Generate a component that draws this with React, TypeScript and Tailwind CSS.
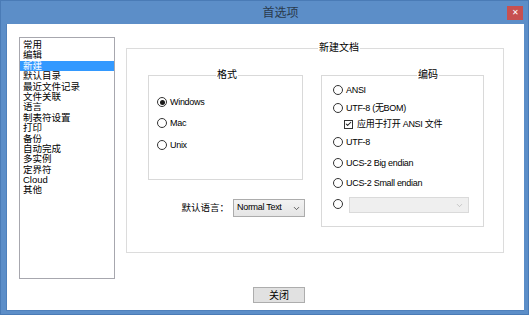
import { Check, ChevronDown } from 'lucide-react';

const font = "font-['Liberation_Sans','Noto_Sans_CJK_SC',sans-serif]";

const items = [
  '常用',
  '编辑',
  '新建',
  '默认目录',
  '最近文件记录',
  '文件关联',
  '语言',
  '制表符设置',
  '打印',
  '备份',
  '自动完成',
  '多实例',
  '定界符',
  'Cloud',
  '其他',
];

function Radio({ checked = false }: { checked?: boolean }) {
  return (
    <span className="w-[10px] h-[10px] rounded-full border border-[#333333] bg-white flex items-center justify-center shrink-0">
      {checked && <span className="w-[5px] h-[5px] rounded-full bg-[#1a1a1a]" />}
    </span>
  );
}

function RadioRow({
  label,
  checked,
  className = '',
}: {
  label: string;
  checked?: boolean;
  className?: string;
}) {
  return (
    <div className={`flex items-center h-[12px] gap-[3px] ${className}`}>
      <Radio checked={checked} />
      <span className="text-[9px] tracking-[-0.3px] leading-[12px]">{label}</span>
    </div>
  );
}

export default function App() {
  return (
    <div className={`w-[529px] h-[315px] bg-[#5c8ec8] border border-[#4a7bb6] relative flex flex-col ${font} text-black`}>
      {/* title bar */}
      <div className="h-[23px] flex items-center justify-center pl-[32px] text-[12px] text-[#2a3a4c]">
        首选项
      </div>
      <div className="absolute right-[5px] top-[5px] w-[16px] h-[14px] bg-[#c75050] flex items-center justify-center text-white text-[8px] leading-none">
        ✕
      </div>

      <div className="ml-[5px] mr-[4px] h-[287px] bg-white border border-[#4f80bb] border-r-0 border-t-0 flex flex-col">
        <div className="flex pt-[13px] pl-[12px]">
          {/* list */}
          <div className="w-[96px] h-[242px] border border-[#a7a7ae] pt-[2px] flex flex-col">
            {items.map((it) => (
              <div
                key={it}
                className={`h-[10.4px] leading-[10.4px] text-[9.5px] pl-[3px] whitespace-nowrap ${
                  it === '新建' ? 'bg-[#3399ff] text-white' : ''
                }`}
              >
                {it}
              </div>
            ))}
          </div>

          {/* group 新建文档 */}
          <div className="relative ml-[11px] mt-[11px] w-[378px] h-[205px] border border-[#dcdcdc] pt-[26px] pl-[21px] flex">
            <span className="absolute left-[191px] -top-[7px] bg-white px-[1px] text-[10px] leading-[12px]">
              新建文档
            </span>

            <div className="flex flex-col w-[155px]">
              {/* 格式 */}
              <div className="relative w-[155px] h-[105px] border border-[#d9d9d9] pt-[20px] pl-[8px] flex flex-col">
                <div className="absolute inset-x-0 -top-[7px] flex justify-center pl-[3px]">
                  <span className="bg-white px-[1px] text-[10px] leading-[12px]">格式</span>
                </div>
                <RadioRow label="Windows" checked />
                <RadioRow label="Mac" className="mt-[9px]" />
                <RadioRow label="Unix" className="mt-[10px]" />
              </div>

              <div className="flex items-center justify-end mt-[19px] -mr-[2px] h-[18px]">
                <span className="text-[9.5px] mr-[4px]">默认语言：</span>
                <div className="w-[72px] h-[18px] border border-[#acacac] bg-gradient-to-b from-[#f2f2f2] to-[#e5e5e5] flex items-center pl-[3px] pr-[3px]">
                  <span className="text-[9px] tracking-[-0.3px] flex-1">Normal Text</span>
                  <ChevronDown size={9} strokeWidth={2} className="text-[#333]" />
                </div>
              </div>
            </div>

            {/* 编码 */}
            <div className="relative ml-[18px] w-[163px] h-[152px] border border-[#d9d9d9] pt-[8px] pl-[11px] flex flex-col">
              <span className="absolute left-[95px] -top-[7px] bg-white px-[1px] text-[10px] leading-[12px]">
                编码
              </span>
              <RadioRow label="ANSI" />
              <RadioRow label="UTF-8 (无BOM)" className="mt-[6px]" />
              <div className="flex items-center h-[12px] gap-[4px] mt-[4px] pl-[11px]">
                <span className="w-[9px] h-[9px] border border-[#333] bg-white flex items-center justify-center">
                  <Check size={8} strokeWidth={3.5} className="text-[#222]" />
                </span>
                <span className="text-[9px] tracking-[-0.3px] leading-[12px]">应用于打开 ANSI 文件</span>
              </div>
              <RadioRow label="UTF-8" className="mt-[6px]" />
              <RadioRow label="UCS-2 Big endian" className="mt-[9px]" />
              <RadioRow label="UCS-2 Small endian" className="mt-[8px]" />
              <div className="flex items-start mt-[8px] gap-[6px]">
                <span className="mt-[2px]">
                  <Radio />
                </span>
                <div className="w-[120px] h-[16px] bg-[#efefef] border border-[#dadada] flex items-center justify-end pr-[4px]">
                  <ChevronDown size={9} strokeWidth={1.5} className="text-[#a8a8a8]" />
                </div>
              </div>
            </div>
          </div>
        </div>

        <div className="mt-[8px] ml-[246px] w-[52px] h-[16px] bg-[#e1e1e1] border border-[#adadad] flex items-center justify-center text-[10px]">
          关闭
        </div>
      </div>
    </div>
  );
}
